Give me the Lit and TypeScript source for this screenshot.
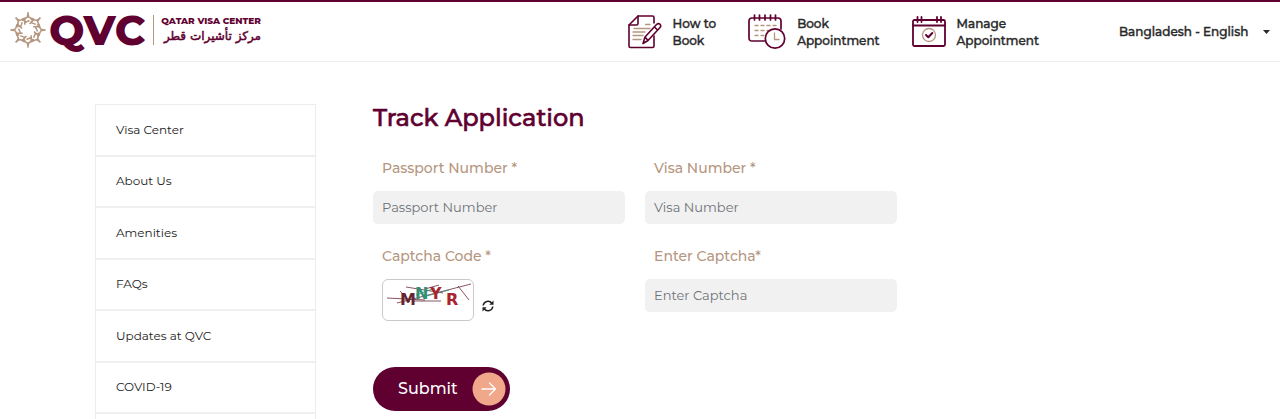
import { LitElement, html, svg, css } from "lit";
import { customElement, property } from "lit/decorators.js";

const MAROON = "#5f0030";
const TAN = "#b5967f";

const petals = [0, 45, 90, 135, 180, 225, 270, 315];

const star = html`<svg class="star" viewBox="-18 -18 36 36" aria-hidden="true">
  ${petals.map(
    (a) => svg`<g transform=${`rotate(${a})`} fill="none" stroke=${TAN} stroke-width="1.5" stroke-linejoin="miter">
      <path d="M0.300 -17.500L-0.800 -12.800L-6 -9.500M-0.300 -17.500L0.800 -12.800L6 -10.500L1.500 -6M-5 -12L-3 -7.500L1.500 -9.500" />
    </g>`
  )}
</svg>`;

const howToIcon = html`<svg width="34" height="34" viewBox="0 0 34 34" fill="none" stroke=${MAROON} stroke-width="1.6" stroke-linejoin="round" stroke-linecap="round" aria-hidden="true">
  <path d="M26 8V2.500Q26 1 24.500 1H10L1 10V31Q1 32.500 2.500 32.500H24.500Q26 32.500 26 31V21" />
  <path d="M10 1V8.500Q10 10 8.500 10H1" />
  <path d="M17.500 9.500H22M6 13.500H22M5 17H17M5 20.500H15M5 24.500H13" stroke=${TAN} stroke-width="1.300" />
  <path d="M15 28.500L17 22L28.500 9.500Q30.500 7.800 32 9.300Q33.500 11 31.800 12.800L20 25.500ZM26.500 12L29.500 15M17 22L20 25.500" />
</svg>`;

const bookIcon = html`<svg width="38" height="36" viewBox="0 0 38 36" fill="none" stroke=${MAROON} stroke-width="1.700" stroke-linejoin="round" stroke-linecap="round" aria-hidden="true">
  <path d="M17 27H4Q1 27 1 24V7Q1 4 4 4H30Q33 4 33 7V15" />
  <path d="M6.500 1V6M11.500 1V6M17 1V6M22.500 1V6M27.500 1V6" />
  <path d="M7 11.500H10M13 11.500H16M19 11.500H22M25 11.500H28M7 16.500H10M13 16.500H16M19 16.500H22M7 21.500H10M13 21.500H16" stroke=${TAN} stroke-width="1.300" />
  <circle cx="27" cy="24.500" r="9.700" fill="#fff" />
  <path d="M26.500 19V25.500H31" stroke=${TAN} stroke-width="1.300" />
</svg>`;

const manageIcon = html`<svg width="34" height="32" viewBox="0 0 34 32" fill="none" stroke=${MAROON} stroke-width="1.800" stroke-linejoin="round" stroke-linecap="round" aria-hidden="true">
  <rect x="1" y="4" width="32" height="26" rx="1.500" />
  <path d="M1 9.500H33M5.500 1V6M9.500 1V6M25 1V6M29 1V6" />
  <circle cx="17" cy="19" r="6.500" stroke=${TAN} stroke-width="1.300" />
  <path d="M14 19L16.300 21.200L20.300 17" stroke-width="2" />
</svg>`;

@customElement("site-header")
export class SiteHeader extends LitElement {
  static styles = css`
    :host { display: block; }
    .bar {
      display: flex; align-items: center; justify-content: space-between;
      box-sizing: border-box; min-height: 62px; padding: 0 8px 0 10px;
      border-top: 2px solid #5f0030; border-bottom: 1px solid #ececec;
      background: #fff;
    }
    a { color: inherit; text-decoration: none; }
    .logo { display: flex; align-items: center; padding-bottom: 4px; color: #5f0030; }
    .star { width: 36px; height: 36px; }
    .qvc { margin-left: 3px; font-size: 42px; line-height: 54px; font-weight: 800; }
    .names {
      display: flex; flex-direction: column; margin-left: 8px; padding-left: 7px;
      border-left: 1px solid #b5967f; font-weight: 800;
    }
    .en { font-size: 9px; line-height: 12px; }
    .ar { font: 400 12px/18px "DejaVu Sans", sans-serif; -webkit-text-stroke: 0.5px #5f0030; }
    .right { display: flex; align-items: center; }
    .links { display: flex; gap: 32px; margin-right: 80px; }
    .link {
      display: flex; align-items: center; gap: 11px;
      font-size: 12px; line-height: 17px; font-weight: 500; color: #2a2a2a;
      -webkit-text-stroke: 0.4px #2a2a2a;
    }
    .lang { display: grid; align-items: center; }
    .lang > * { grid-area: 1 / 1; }
    select {
      appearance: none; border: 0; background: none; margin: 0; padding: 0 23px 0 0;
      font: inherit; font-size: 12px; line-height: 20px; font-weight: 500; color: #2a2a2a;
      -webkit-text-stroke: 0.4px #2a2a2a;
    }
    .caret { justify-self: end; pointer-events: none; margin-right: 2px; }
  `;

  render() {
    return html`<header class="bar">
      <a class="logo" href="#">
        ${star}
        <span class="qvc">QVC</span>
        <span class="names">
          <span class="en">QATAR VISA CENTER</span>
          <span class="ar" lang="ar" dir="rtl">مركز تأشيرات قطر</span>
        </span>
      </a>
      <div class="right">
        <nav class="links">
          <a class="link" href="#">${howToIcon}<span>How to<br />Book</span></a>
          <a class="link" href="#">${bookIcon}<span>Book<br />Appointment</span></a>
          <a class="link" href="#">${manageIcon}<span>Manage<br />Appointment</span></a>
        </nav>
        <div class="lang">
          <select aria-label="Country and language">
            <option>Bangladesh - English</option>
          </select>
          <svg class="caret" width="7" height="4" viewBox="0 0 7 4" aria-hidden="true"><path d="M0 0H7L3.500 4Z" fill="#2a2a2a" /></svg>
        </div>
      </div>
    </header>`;
  }
}

@customElement("side-menu")
export class SideMenu extends LitElement {
  @property({ attribute: false }) items: string[] = [];

  static styles = css`
    :host { display: flex; }
    nav {
      flex: 1; display: flex; flex-direction: column; box-sizing: border-box;
      border: 1px solid #ececec; border-bottom: 0;
    }
    ul { list-style: none; margin: 0; padding: 0; min-height: 309px; display: grid; grid-auto-rows: 1fr; }
    li { display: flex; border-bottom: 2px solid #efefef; }
    a {
      flex: 1; display: flex; align-items: center; padding: 0 20px;
      color: #222; text-decoration: none; font-size: 12px; line-height: 20px;
    }
  `;

  render() {
    return html`<nav>
      <ul>${this.items.map((t) => html`<li><a href="#">${t}</a></li>`)}</ul>
    </nav>`;
  }
}

@customElement("track-form")
export class TrackForm extends LitElement {
  static styles = css`
    :host { display: block; }
    h1 { margin: 0; font-size: 24px; line-height: 28px; font-weight: 500; color: #5f0030; -webkit-text-stroke: 0.6px #5f0030; }
    .fields {
      display: grid; grid-template-columns: 1fr 1fr; column-gap: 20px; row-gap: 20px;
      margin-top: 24px; align-items: start;
    }
    .field { display: flex; flex-direction: column; }
    .label { padding: 0 9px; margin-bottom: 11px; font-size: 14px; line-height: 24px; font-weight: 500; color: #b5967f; }
    input {
      box-sizing: border-box; width: 100%; height: 33px; border: 0; border-radius: 5px;
      background: #f1f1f1; padding: 0 9px 1px; font: inherit; font-size: 13px; color: #333;
    }
    input::placeholder { color: #6f7378; opacity: 1; }
    .captcha { display: flex; align-items: center; gap: 6px; padding-left: 9px; }
    .image { box-sizing: border-box; width: 92px; height: 42px; border: 1px solid #c9c9c9; border-radius: 6px; }
    .refresh { display: flex; border: 0; background: none; padding: 12px 2px 0; color: #222; }
    .submit {
      display: flex; align-items: center; gap: 14px; margin-top: 46px;
      border: 0; border-radius: 22px; padding: 5px 4px 5px 25px;
      background: #5f0030; color: #fff; font: inherit; font-size: 16px; line-height: 24px; font-weight: 500;
    }
  `;

  render() {
    return html`<form @submit=${(e: Event) => e.preventDefault()}>
      <h1>Track Application</h1>
      <div class="fields">
        <div class="field">
          <label class="label" for="passport">Passport Number *</label>
          <input id="passport" placeholder="Passport Number" />
        </div>
        <div class="field">
          <label class="label" for="visa">Visa Number *</label>
          <input id="visa" placeholder="Visa Number" />
        </div>
        <div class="field">
          <span class="label">Captcha Code *</span>
          <div class="captcha">
            <svg class="image" viewBox="0 0 90 40" role="img" aria-label="Captcha">
              <g fill="none" stroke="#6b2a3a" stroke-width="0.800">
                <path d="M4 18L42 20M14 23L88 4M17 11L27 22M23 7L60 13M42 9L56 5M30 21H58M75 6L86 20" />
                <path d="M33 15L52 8M40 17L66 10" stroke="#3b8a70" />
              </g>
              <g font-family="DejaVu Sans, sans-serif" font-weight="700" font-size="16">
                <text x="17" y="25" fill="#632533">M</text>
                <text x="32" y="19" fill="#2f8f75">N</text>
                <text x="47" y="19" fill="#a8242f">Y</text>
                <text x="63" y="25" fill="#a8242f">R</text>
              </g>
            </svg>
            <button class="refresh" type="button" aria-label="New captcha">
              <svg width="12" height="12" viewBox="0 0 12 12" fill="none" stroke="currentColor" stroke-width="1.500" aria-hidden="true">
                <path d="M1.200 5.500A4.800 4.800 0 0 1 9.800 3.200M10.800 6.500A4.800 4.800 0 0 1 2.200 8.800" />
                <path d="M11.500 0.500V4.700H7.300ZM0.500 11.500V7.300H4.700Z" fill="currentColor" stroke="none" />
              </svg>
            </button>
          </div>
        </div>
        <div class="field">
          <label class="label" for="code">Enter Captcha*</label>
          <input id="code" placeholder="Enter Captcha" />
        </div>
      </div>
      <button class="submit" type="submit">
        <span>Submit</span>
        <svg width="34" height="34" viewBox="0 0 34 34" aria-hidden="true">
          <circle cx="17" cy="17" r="16.500" fill="#f0a78a" />
          <path d="M10 17H23.500M17.500 11L23.500 17L17.500 23" fill="none" stroke="#fff" stroke-width="1.300" stroke-linecap="round" stroke-linejoin="round" />
        </svg>
      </button>
    </form>`;
  }
}

@customElement("app-root")
export class AppRoot extends LitElement {
  static styles = css`
    :host {
      display: flex; flex-direction: column; min-height: 100vh;
      background: #fff; font-family: Montserrat, Inter, sans-serif;
    }
    .page {
      flex: 1; display: grid; grid-template-columns: 221px minmax(0, 524px); column-gap: 57px;
      box-sizing: border-box; width: 100%; max-width: 1090px; margin: 0 auto; padding-top: 42px;
    }
  `;

  render() {
    return html`<site-header></site-header>
      <main class="page">
        <side-menu .items=${["Visa Center", "About Us", "Amenities", "FAQs", "Updates at QVC", "COVID-19"]}></side-menu>
        <track-form></track-form>
      </main>`;
  }
}
